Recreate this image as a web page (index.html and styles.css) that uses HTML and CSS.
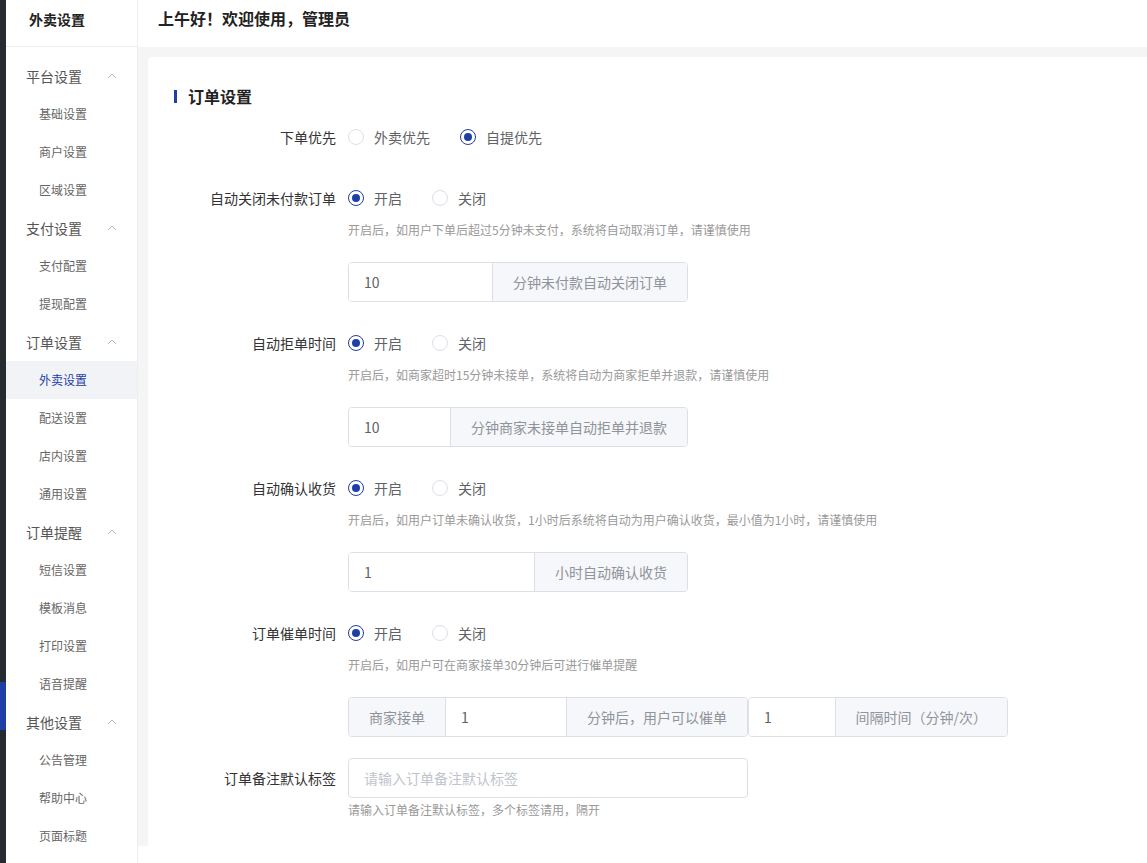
FILE: index.html
```html
<!DOCTYPE html>
<html lang="zh-CN">
<head>
  <meta charset="UTF-8" />
  <meta name="viewport" content="width=device-width, initial-scale=1.0"/>
  <title>外卖设置</title>
  <link rel="stylesheet" href="styles.css">
</head>
<body>
  <div class="app">
    <div class="rail"><div class="rail-active"></div></div>

    <aside class="sidebar">
      <div class="sidebar-title">外卖设置</div>
      <ul class="menu">
        <li class="menu-group">平台设置<svg class="chev" viewBox="0 0 10 6"><polyline points="1,5 5,1 9,5"/></svg></li>
        <li class="menu-item">基础设置</li>
        <li class="menu-item">商户设置</li>
        <li class="menu-item">区域设置</li>
        <li class="menu-group">支付设置<svg class="chev" viewBox="0 0 10 6"><polyline points="1,5 5,1 9,5"/></svg></li>
        <li class="menu-item">支付配置</li>
        <li class="menu-item">提现配置</li>
        <li class="menu-group">订单设置<svg class="chev" viewBox="0 0 10 6"><polyline points="1,5 5,1 9,5"/></svg></li>
        <li class="menu-item active">外卖设置</li>
        <li class="menu-item">配送设置</li>
        <li class="menu-item">店内设置</li>
        <li class="menu-item">通用设置</li>
        <li class="menu-group">订单提醒<svg class="chev" viewBox="0 0 10 6"><polyline points="1,5 5,1 9,5"/></svg></li>
        <li class="menu-item">短信设置</li>
        <li class="menu-item">模板消息</li>
        <li class="menu-item">打印设置</li>
        <li class="menu-item">语音提醒</li>
        <li class="menu-group">其他设置<svg class="chev" viewBox="0 0 10 6"><polyline points="1,5 5,1 9,5"/></svg></li>
        <li class="menu-item">公告管理</li>
        <li class="menu-item">帮助中心</li>
        <li class="menu-item">页面标题</li>
      </ul>
    </aside>

    <main class="main">
      <header class="topbar">上午好！欢迎使用，管理员</header>
      <div class="content">
        <section class="card">
          <h2 class="section-title">订单设置</h2>

          <div class="form-item">
            <div class="form-label">下单优先</div>
            <div class="form-body">
              <div class="radios">
                <label class="radio"><span class="dot"></span>外卖优先</label>
                <label class="radio checked"><span class="dot"></span>自提优先</label>
              </div>
            </div>
          </div>

          <div class="form-item">
            <div class="form-label">自动关闭未付款订单</div>
            <div class="form-body">
              <div class="radios">
                <label class="radio checked"><span class="dot"></span>开启</label>
                <label class="radio"><span class="dot"></span>关闭</label>
              </div>
              <div class="hint">开启后，如用户下单后超过5分钟未支付，系统将自动取消订单，请谨慎使用</div>
              <div class="input-group w340">
                <input class="field" type="text" value="10" />
                <span class="addon">分钟未付款自动关闭订单</span>
              </div>
            </div>
          </div>

          <div class="form-item">
            <div class="form-label">自动拒单时间</div>
            <div class="form-body">
              <div class="radios">
                <label class="radio checked"><span class="dot"></span>开启</label>
                <label class="radio"><span class="dot"></span>关闭</label>
              </div>
              <div class="hint">开启后，如商家超时15分钟未接单，系统将自动为商家拒单并退款，请谨慎使用</div>
              <div class="input-group w340">
                <input class="field" type="text" value="10" />
                <span class="addon">分钟商家未接单自动拒单并退款</span>
              </div>
            </div>
          </div>

          <div class="form-item">
            <div class="form-label">自动确认收货</div>
            <div class="form-body">
              <div class="radios">
                <label class="radio checked"><span class="dot"></span>开启</label>
                <label class="radio"><span class="dot"></span>关闭</label>
              </div>
              <div class="hint">开启后，如用户订单未确认收货，1小时后系统将自动为用户确认收货，最小值为1小时，请谨慎使用</div>
              <div class="input-group w340">
                <input class="field" type="text" value="1" />
                <span class="addon">小时自动确认收货</span>
              </div>
            </div>
          </div>

          <div class="form-item">
            <div class="form-label">订单催单时间</div>
            <div class="form-body">
              <div class="radios">
                <label class="radio checked"><span class="dot"></span>开启</label>
                <label class="radio"><span class="dot"></span>关闭</label>
              </div>
              <div class="hint">开启后，如用户可在商家接单30分钟后可进行催单提醒</div>
              <div class="group-row">
                <div class="input-group w400">
                  <span class="addon">商家接单</span>
                  <input class="field" type="text" value="1" />
                  <span class="addon">分钟后，用户可以催单</span>
                </div>
                <div class="input-group w260">
                  <input class="field" type="text" value="1" />
                  <span class="addon">间隔时间（分钟/次）</span>
                </div>
              </div>
            </div>
          </div>

          <div class="form-item">
            <div class="form-label">订单备注默认标签</div>
            <div class="form-body">
              <input class="text-input" type="text" placeholder="请输入订单备注默认标签" />
              <div class="hint">请输入订单备注默认标签，多个标签请用，隔开</div>
            </div>
          </div>
        </section>
      </div>
    </main>
  </div>
</body>
</html>
```

FILE: styles.css
```css
* {
  box-sizing: border-box;
  margin: 0;
  padding: 0;
  font-family: "Noto Sans CJK SC", "Noto Sans", sans-serif;
}

body {
  background: #fff;
  height: 100vh;
  overflow: hidden;
}

.app {
  display: flex;
  height: 100vh;
}

/* dark rail on the far left */
.rail {
  width: 6px;
  flex-shrink: 0;
  background: #262a31;
  display: flex;
  flex-direction: column;
}

.rail-active {
  margin-top: 682px;
  height: 48px;
  background: #1f3ea8;
}

.sidebar {
  width: 132px;
  flex-shrink: 0;
  border-right: 1px solid #eeeeee;
  overflow: hidden;
}

.sidebar-title {
  height: 47px;
  line-height: 38px;
  padding-left: 23px;
  font-size: 14px;
  font-weight: bold;
  color: #222;
  border-bottom: 1px solid #eeeeee;
}

.menu {
  list-style: none;
  padding-top: 10px;
}

.menu-group,
.menu-item {
  height: 38px;
  line-height: 38px;
  display: flex;
  align-items: center;
}

.menu-group {
  padding-left: 20px;
  font-size: 14px;
  color: #555;
}

.chev {
  width: 10px;
  height: 6px;
  margin-left: 25px;
  fill: none;
  stroke: #bbbbbb;
  stroke-width: 1;
}

.menu-item {
  padding-left: 33px;
  font-size: 12px;
  color: #666;
}

.menu-item.active {
  background: #f2f3f6;
  color: #1f3ea8;
}

.main {
  flex: 1;
  height: 846px;
  display: flex;
  flex-direction: column;
  overflow: hidden;
}

.topbar {
  height: 47px;
  line-height: 37px;
  padding-left: 20px;
  font-size: 16px;
  font-weight: bold;
  color: #222;
  background: #fff;
}

.content {
  flex: 1;
  background: #f5f5f5;
  padding: 10px 0 0 10px;
  display: flex;
}

.card {
  flex: 1;
  background: #fff;
  border-radius: 4px 0 0 0;
  padding-top: 29px;
}

.section-title {
  margin-left: 26px;
  padding-left: 11px;
  border-left: 3px solid #1f3ea8;
  font-size: 16px;
  font-weight: bold;
  color: #222;
  height: 13px;
  line-height: 13px;
  margin-top: 4px;
  margin-bottom: 14px;
  display: flex;
  align-items: center;
}

.form-item {
  display: flex;
  margin-bottom: 21px;
}

.form-label {
  width: 188px;
  margin-right: 12px;
  text-align: right;
  font-size: 14px;
  line-height: 40px;
  color: #333;
  flex-shrink: 0;
}

.form-body {
  display: flex;
  flex-direction: column;
  align-items: flex-start;
}

.radios {
  display: flex;
  height: 40px;
  align-items: center;
}

.radio {
  display: flex;
  align-items: center;
  font-size: 14px;
  color: #606266;
  margin-right: 30px;
}

.dot {
  width: 16px;
  height: 16px;
  border: 1px solid #dcdfe6;
  border-radius: 50%;
  margin-right: 10px;
  display: flex;
  align-items: center;
  justify-content: center;
}

.radio.checked .dot {
  border-color: #1f3ea8;
}

.radio.checked .dot::after {
  content: "";
  width: 8px;
  height: 8px;
  border-radius: 50%;
  background: #1f3ea8;
}

.hint {
  margin-top: 2px;
  font-size: 12px;
  line-height: 20px;
  color: #999;
}

.input-group {
  display: flex;
  height: 40px;
  border: 1px solid #dcdfe6;
  border-radius: 4px;
  overflow: hidden;
}

.hint + .input-group,
.hint + .group-row {
  margin-top: 22px;
}

.group-row {
  display: flex;
}

.w340 { width: 340px; }
.w400 { width: 400px; }
.w260 { width: 260px; }

.field {
  flex: 1;
  min-width: 0;
  border: none;
  outline: none;
  padding-left: 15px;
  font-size: 14px;
  color: #606266;
  background: #fff;
}

.addon {
  flex-shrink: 0;
  padding: 0 20px;
  background: #f5f7fa;
  color: #909399;
  font-size: 14px;
  line-height: 38px;
  white-space: nowrap;
}

.addon:first-child {
  border-right: 1px solid #dcdfe6;
}

.field + .addon {
  border-left: 1px solid #dcdfe6;
}

.text-input {
  width: 400px;
  height: 40px;
  border: 1px solid #dcdfe6;
  border-radius: 4px;
  padding-left: 15px;
  font-size: 14px;
  color: #606266;
  outline: none;
}

.text-input::placeholder {
  color: #c0c4cc;
}
```
